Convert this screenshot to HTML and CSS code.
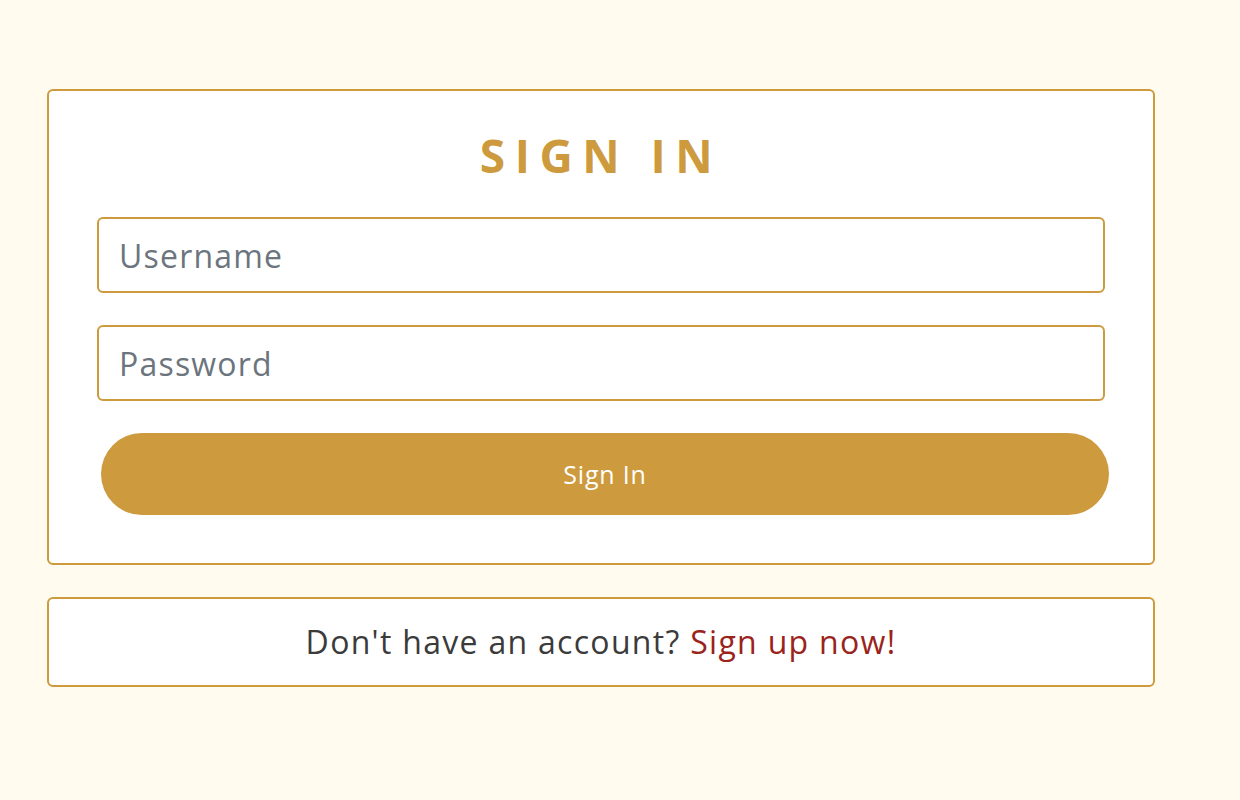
FILE: index.html
```html
<!DOCTYPE html>
<html lang="en">
<head>
<meta charset="utf-8">
<title>Sign In</title>
<link rel="stylesheet" href="styles.css">
</head>
<body>
<main class="page">
  <form class="card signin">
    <h1 class="title">SIGN IN</h1>
    <input class="field" type="text" placeholder="Username">
    <input class="field" type="password" placeholder="Password">
    <button class="btn" type="button">Sign In</button>
  </form>
  <div class="card signup">
    <p class="signup-text">Don't have an account? <a class="signup-link" href="#">Sign up now!</a></p>
  </div>
</main>
</body>
</html>
```

FILE: styles.css
```css
html, body {
  margin: 0;
  padding: 0;
}
body {
  background: #fffcef;
  font-family: "Open Sans", "Noto Sans", sans-serif;
  color: #3b3b3b;
}
.page {
  width: 1108px;
  padding: 89px 0 0 47px;
  display: flex;
  flex-direction: column;
  gap: 32px;
}
.card {
  background: #ffffff;
  border: 2px solid #cd9a3e;
  border-radius: 6px;
  box-sizing: border-box;
}
.signin {
  display: flex;
  flex-direction: column;
  padding: 37px 48px 48px;
  margin: 0;
}
.title {
  margin: 0 0 34px;
  font-size: 46px;
  line-height: 1.2;
  font-weight: 700;
  letter-spacing: 9.5px;
  text-align: center;
  color: #cd9a3e;
}
.field {
  display: block;
  box-sizing: border-box;
  width: 100%;
  height: 76px;
  margin: 0 0 32px;
  padding: 0 20px;
  border: 2px solid #cd9a3e;
  border-radius: 6px;
  background: #ffffff;
  font-family: inherit;
  font-size: 32px;
  letter-spacing: 1.2px;
  color: #3b3b3b;
  outline: none;
}
.field::placeholder {
  color: #6c757d;
  opacity: 1;
}
.btn {
  display: block;
  box-sizing: border-box;
  width: 100%;
  height: 82px;
  margin: 0 0 0 4px;
  border: none;
  border-radius: 41px;
  background: #cd9a3e;
  color: #ffffff;
  font-family: inherit;
  font-size: 25px;
  letter-spacing: 0.8px;
  cursor: pointer;
}
.signup {
  height: 90px;
  display: flex;
  align-items: center;
  justify-content: center;
}
.signup-text {
  margin: 0;
  font-size: 32px;
  line-height: 1.2;
  letter-spacing: 1.3px;
}
.signup-link {
  color: #9a231b;
  text-decoration: none;
}
```
